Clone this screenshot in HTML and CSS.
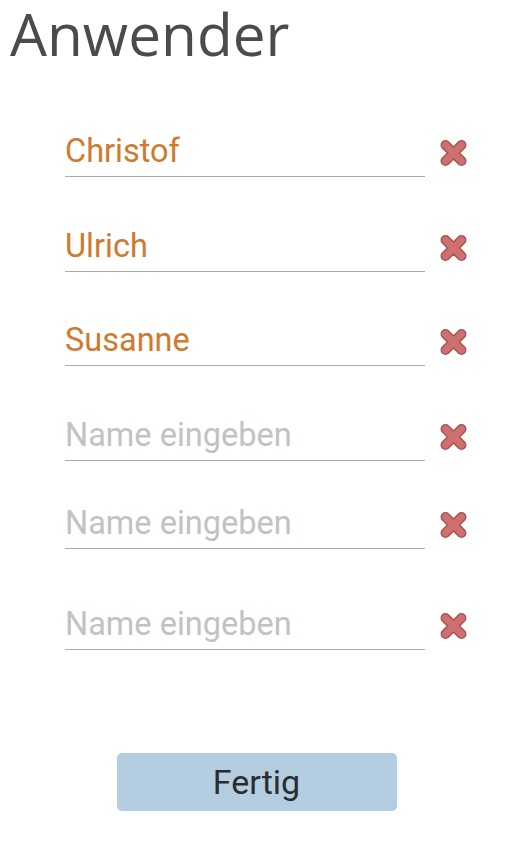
FILE: index.html
```
<!DOCTYPE html>
<html lang="de">
<head>
<meta charset="utf-8">
<title>Anwender</title>
<link rel="stylesheet" href="styles.css">
</head>
<body>
<div class="screen">
  <h1 class="title">Anwender</h1>
  <div class="list">
    <div class="row">
      <div class="field filled">Christof</div>
      <svg class="del" viewBox="0 0 33 32"><path class="o" d="M8.5 8L24.5 24M24.5 8L8.5 24"/><path class="i" d="M8.5 8L24.5 24M24.5 8L8.5 24"/></svg>
    </div>
    <div class="row">
      <div class="field filled">Ulrich</div>
      <svg class="del" viewBox="0 0 33 32"><path class="o" d="M8.5 8L24.5 24M24.5 8L8.5 24"/><path class="i" d="M8.5 8L24.5 24M24.5 8L8.5 24"/></svg>
    </div>
    <div class="row">
      <div class="field filled">Susanne</div>
      <svg class="del" viewBox="0 0 33 32"><path class="o" d="M8.5 8L24.5 24M24.5 8L8.5 24"/><path class="i" d="M8.5 8L24.5 24M24.5 8L8.5 24"/></svg>
    </div>
    <div class="row">
      <div class="field empty">Name eingeben</div>
      <svg class="del" viewBox="0 0 33 32"><path class="o" d="M8.5 8L24.5 24M24.5 8L8.5 24"/><path class="i" d="M8.5 8L24.5 24M24.5 8L8.5 24"/></svg>
    </div>
    <div class="row row-tight">
      <div class="field empty">Name eingeben</div>
      <svg class="del" viewBox="0 0 33 32"><path class="o" d="M8.5 8L24.5 24M24.5 8L8.5 24"/><path class="i" d="M8.5 8L24.5 24M24.5 8L8.5 24"/></svg>
    </div>
    <div class="row row-wide">
      <div class="field empty">Name eingeben</div>
      <svg class="del" viewBox="0 0 33 32"><path class="o" d="M8.5 8L24.5 24M24.5 8L8.5 24"/><path class="i" d="M8.5 8L24.5 24M24.5 8L8.5 24"/></svg>
    </div>
  </div>
  <div class="actions">
    <button class="done">Fertig</button>
  </div>
</div>
</body>
</html>
```
FILE: styles.css
```
html, body {
  margin: 0;
  padding: 0;
  background: #ffffff;
}
.screen {
  width: 513px;
  height: 848px;
  font-family: Roboto, "Noto Sans", sans-serif;
}
.title {
  margin: 0;
  padding: 1px 0 0 10px;
  font-family: "Open Sans", "Noto Sans", sans-serif;
  font-weight: 400;
  font-size: 58.5px;
  line-height: 64px;
  color: #4b4b4b;
}
.list {
  display: flex;
  flex-direction: column;
  padding: 68px 0 0 65px;
}
.row {
  display: flex;
  align-items: flex-start;
  margin-top: 50.5px;
}
.row:first-child {
  margin-top: 0;
}
.row-tight {
  margin-top: 44.5px;
}
.row-wide {
  margin-top: 57px;
}
.field {
  width: 360px;
  height: 36px;
  padding-bottom: 7px;
  border-bottom: 1px solid #ababab;
  font-size: 32.5px;
  line-height: 36px;
  white-space: nowrap;
}
.filled {
  color: #cf7a2e;
}
.empty {
  color: #c2c2c2;
}
.del {
  width: 33px;
  height: 32px;
  margin: 4px 0 0 12px;
  fill: none;
  stroke-linecap: round;
}
.del .o {
  stroke: #a65356;
  stroke-width: 10;
}
.del .i {
  stroke: #cf7070;
  stroke-width: 7;
}
.actions {
  display: flex;
  justify-content: center;
  padding-top: 103px;
}
.done {
  width: 280px;
  height: 58px;
  border: none;
  border-radius: 5px;
  background: #b4cde0;
  color: #2a2d30;
  font-family: Roboto, "Noto Sans", sans-serif;
  font-size: 34px;
  padding: 0;
}
```
